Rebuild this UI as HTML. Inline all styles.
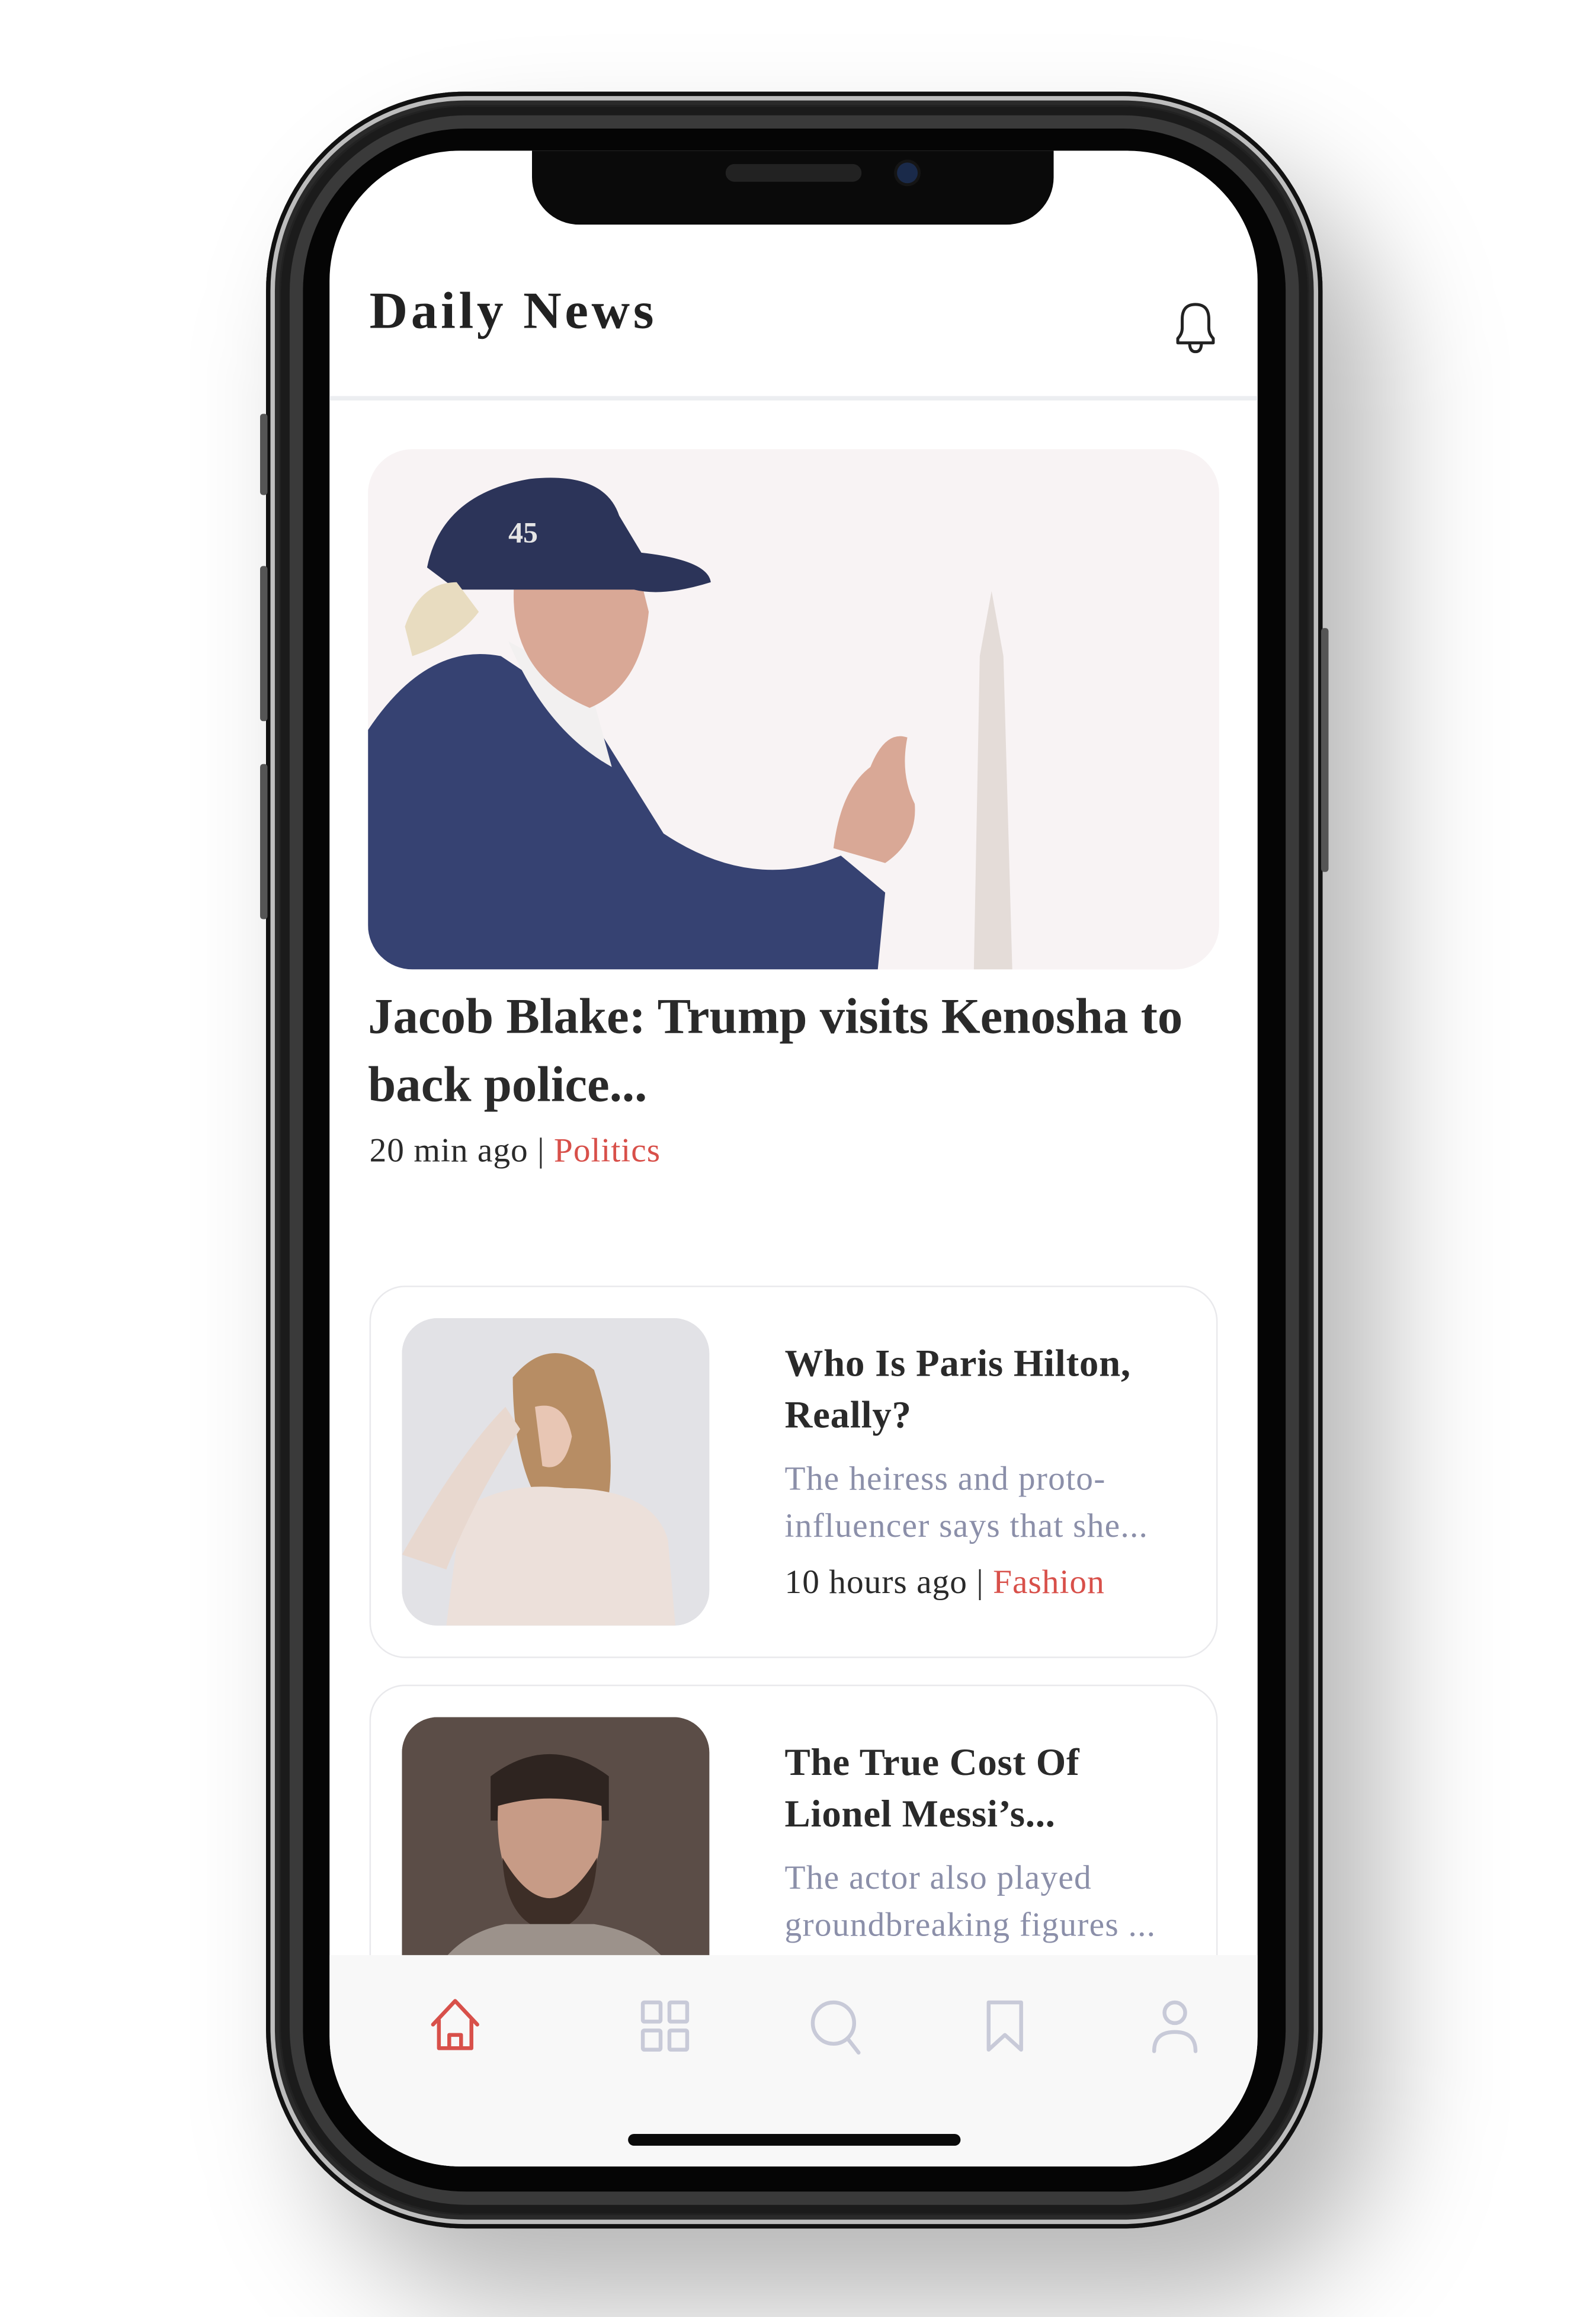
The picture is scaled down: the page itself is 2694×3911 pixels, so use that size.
<!DOCTYPE html>
<html><head><meta charset="utf-8">
<style>
html,body{margin:0;padding:0;background:#fff;}
body{width:2694px;height:3911px;overflow:hidden;position:relative;}
#w{position:absolute;left:0;top:0;width:1080px;height:1568px;transform:scale(2.49444);transform-origin:0 0;background:#fff;}
.a{position:absolute;}
.serif{font-family:"Liberation Serif",serif;}
.shadow{left:215px;top:110px;width:720px;height:1450px;border-radius:140px;background:rgba(0,0,0,0.28);filter:blur(40px);}
.frame{left:180px;top:62px;width:715px;height:1446px;border-radius:135px;background:#222;box-shadow:inset 0 0 0 3px #111, inset 0 0 0 6px #bdbdbd, inset 0 0 0 9px #2a2a2a;}
.bezel{left:190px;top:72px;width:695px;height:1426px;border-radius:126px;background:#3a3a3a;box-shadow:inset 0 0 0 6px #1b1b1b;}
.black{left:205px;top:87px;width:665px;height:1396px;border-radius:110px;background:#050505;}
.screen{left:223px;top:102px;width:628px;height:1364px;border-radius:88px;background:#fff;overflow:hidden;}
.notch{left:137px;top:0;width:353px;height:50px;background:#0a0a0a;border-radius:0 0 32px 32px;}
.t{color:#2a2a2a;font-weight:bold;}
.m{color:#2a2a2a;font-size:23px;letter-spacing:0.4px;}
.m span{color:#d8504a;}
.d{color:#8b8fa9;font-size:23px;line-height:32px;letter-spacing:0.5px;}
.card{border:1.5px solid #e9e9ec;border-radius:24px;background:#fff;}
</style></head><body>
<div id="w">
 <div class="a shadow"></div>
 <div class="a frame"></div>
 <div class="a bezel"></div>
 <div class="a black"></div>
 <div class="a" style="left:176px;top:280px;width:5px;height:55px;background:#555;border-radius:2px"></div>
 <div class="a" style="left:176px;top:383px;width:5px;height:105px;background:#555;border-radius:2px"></div>
 <div class="a" style="left:176px;top:517px;width:5px;height:105px;background:#555;border-radius:2px"></div>
 <div class="a" style="left:894px;top:425px;width:5px;height:165px;background:#555;border-radius:2px"></div>
 <div class="a screen">
  <div class="a serif" style="left:27px;top:88px;font-size:32px;font-weight:bold;color:#222;letter-spacing:2px;transform:scale(1.12,1.1);transform-origin:0 0;">Daily News</div>
  <svg class="a" style="left:568px;top:100px" width="36" height="40" viewBox="0 0 36 40"><path d="M6 30 L6 27 Q9 24 9 20 L9 14 Q9 4 18 4 Q27 4 27 14 L27 20 Q27 24 30 27 L30 30 Z M14 30 Q14 36 18 36 Q22 36 22 30" fill="none" stroke="#222" stroke-width="2" stroke-linejoin="round"/></svg>
  <div class="a" style="left:0;top:166px;width:628px;height:3px;background:#eceef1"></div>
  <div class="a" style="left:26px;top:202px;width:576px;height:352px;border-radius:30px;overflow:hidden;background:#f8f3f4">
   <svg width="576" height="352" viewBox="0 0 576 352">
    <path d="M410 352 L414 140 L422 96 L430 140 L436 352 Z" fill="#e4dcd8"/>
    <path d="M0 190 Q40 130 90 140 L150 180 L200 260 Q260 300 320 275 L350 300 L345 352 L0 352 Z" fill="#364272"/>
    <path d="M95 130 Q120 190 165 215 L150 160 Z" fill="#f2f0f0"/>
    <path d="M100 80 Q90 150 150 175 Q185 160 190 110 L180 70 Z" fill="#d9a896"/>
    <path d="M40 80 Q50 30 110 20 Q160 15 170 45 L185 70 Q230 75 232 90 Q200 100 180 95 L60 95 Z" fill="#2c3459"/>
    <path d="M25 120 Q35 90 60 90 L75 110 Q60 130 30 140 Z" fill="#e8dcc0"/>
    <path d="M315 270 Q320 230 340 215 Q350 190 365 195 Q360 220 370 240 Q372 265 350 280 Z" fill="#d9a896"/>
    <text x="95" y="63" font-family="Liberation Serif" font-size="20" fill="#e5e5e5" font-weight="bold">45</text>
   </svg>
  </div>
  <div class="a serif t" style="left:26px;top:564px;font-size:34px;line-height:46px;width:600px;letter-spacing:0px;font-weight:600">Jacob Blake: Trump visits Kenosha to back police...</div>
  <div class="a serif m" style="left:27px;top:664px">20 min ago | <span>Politics</span></div>
  <div class="a card" style="left:27px;top:768px;width:572px;height:250px"></div>
  <div class="a" style="left:49px;top:790px;width:208px;height:208px;border-radius:24px;overflow:hidden;background:#dfe0e4">
   <svg width="208" height="208" viewBox="0 0 208 208"><rect width="208" height="208" fill="#e2e2e6"/>
    <path d="M75 40 Q100 10 130 35 Q145 80 140 120 L90 120 Q75 90 75 40Z" fill="#b78d64"/>
    <path d="M90 60 Q110 55 115 80 Q110 105 95 100 Z" fill="#e8c6b4"/>
    <path d="M40 130 Q70 110 110 115 Q170 115 180 150 L185 208 L30 208 Z" fill="#ece0da"/>
    <path d="M0 160 Q40 90 70 60 L80 75 Q50 120 30 170 Z" fill="#e8d8cf"/>
   </svg>
  </div>
  <div class="a serif t" style="left:308px;top:803px;font-size:26px;line-height:35px;letter-spacing:0.3px">Who Is Paris Hilton,<br>Really?</div>
  <div class="a serif d" style="left:308px;top:883px">The heiress and proto-<br>influencer says that she...</div>
  <div class="a serif m" style="left:308px;top:956px">10 hours ago | <span>Fashion</span></div>
  <div class="a card" style="left:27px;top:1038px;width:572px;height:250px"></div>
  <div class="a" style="left:49px;top:1060px;width:208px;height:208px;border-radius:24px;overflow:hidden;background:#5a4b45">
   <svg width="208" height="208" viewBox="0 0 208 208"><rect width="208" height="208" fill="#5b4d47"/>
    <path d="M60 40 Q100 10 140 40 L140 70 L60 70 Z" fill="#2e2420"/>
    <path d="M65 60 Q100 50 135 60 Q138 120 100 135 Q62 120 65 60Z" fill="#c79b86"/>
    <path d="M68 95 Q100 150 132 95 Q130 140 100 145 Q70 140 68 95Z" fill="#3d2e27"/>
    <path d="M10 208 Q20 150 70 140 L130 140 Q190 150 195 208Z" fill="#9c928b"/>
   </svg>
  </div>
  <div class="a serif t" style="left:308px;top:1073px;font-size:26px;line-height:35px;letter-spacing:0.3px">The True Cost Of<br>Lionel Messi’s...</div>
  <div class="a serif d" style="left:308px;top:1153px">The actor also played<br>groundbreaking figures ...</div>
  <div class="a" style="left:0;top:1221px;width:628px;height:143px;background:#f8f8f8"></div>
  <svg class="a" style="left:0;top:1248px" width="628" height="44" viewBox="0 0 628 44">
   <g fill="none" stroke-width="2.6" stroke-linecap="round" stroke-linejoin="round">
    <path d="M70 20 L85 4 L100 20 M74 17 L74 36 L96 36 L96 17 M81 36 L81 27 L89 27 L89 36" stroke="#d8504a"/>
    <g stroke="#c8cad8"><rect x="212" y="5" width="12" height="13" rx="1"/><rect x="230" y="5" width="12" height="13" rx="1"/><rect x="212" y="24" width="12" height="13" rx="1"/><rect x="230" y="24" width="12" height="13" rx="1"/>
    <circle cx="341" cy="19" r="14"/><path d="M351 30 L358 39"/>
    <path d="M446 5 L468 5 L468 37 L457 27 L446 37 Z"/>
    <circle cx="572" cy="12" r="7"/><path d="M558 38 Q558 25 572 25 Q586 25 586 38"/></g>
   </g>
  </svg>
  <div class="a" style="left:202px;top:1342px;width:225px;height:8px;border-radius:4px;background:#0a0a0a"></div>
  <div class="a notch"></div>
  <div class="a" style="left:268px;top:9px;width:92px;height:12px;border-radius:6px;background:#222"></div>
  <div class="a" style="left:384px;top:8px;width:14px;height:14px;border-radius:7px;background:#1a2a4a;box-shadow:0 0 0 2px #151515"></div>
 </div>
</div>
</body></html>
